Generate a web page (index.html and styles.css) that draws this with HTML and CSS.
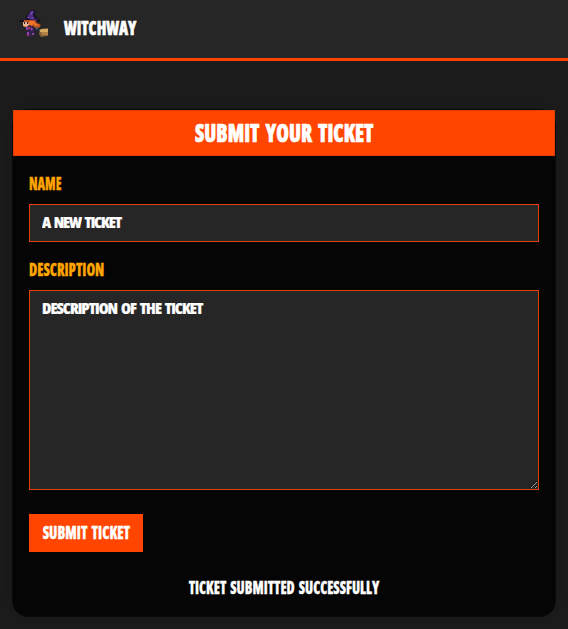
FILE: index.html
```html
<!DOCTYPE html>
<html lang="en">
<head>
<meta charset="utf-8">
<title>Witchway</title>
<link rel="stylesheet" href="styles.css">
</head>
<body>
<header class="navbar">
  <svg class="logo" viewBox="0 0 30 28" aria-hidden="true">
    <path fill="#17121f" d="M8 5 11 1l4-1 3 2-2 2 2 4 4 2-2 2-8-1-11 1-1-2 6-1z"/>
    <path fill="#4c2b83" d="m9 5 3-4 3 0 2 2-3-1 0 3 2 4-8-1zM2 9l6 1 11-1-2 2-9 0z"/>
    <path fill="#7546b4" d="m11 3 3-2v2l-2 2zM9 7l6 1v1L8 8z"/>
    <path fill="#b54e20" d="m5 10 11 0 2 3 4 2-2 3-4 0-2-2-3 2-6-1z"/>
    <path fill="#ed762c" d="m10 11 5 0 2 3 4 1-4 1-3-2-3 3-1-3zM4 13l2-2 1 2-2 3z"/>
    <path fill="#efb18c" d="M4 12h5l1 3-2 2-4-1z"/>
    <path fill="#282038" d="M5 12h1v2H5zm3 0h1v2H8zM0 18h8v1H0zm14 1 7 2v1l-7-1z"/>
    <path fill="#33204f" d="m7 17 4-2 4 3 0 4 2 3-4-1-1 3h-2l-1-3H6l2-3z"/>
    <path fill="#8547a1" d="M7 17h2v3H7zm5 0 2 2-1 2-2-2zM8 22h2v3H8zm5 1h2v2h-2z"/>
    <path fill="#b12852" d="M9 17h2v2H9zm-1 8h2v1H8z"/>
    <path fill="#337584" d="m17 17 2 1-1 2-1-1zm3 3 2-1v2h-2z"/>
    <path fill="#82603a" d="m21 19 8-1v8l-7 1-2-3z"/>
    <path fill="#d5a960" d="m21 20 2-1h6v3h-8z"/>
    <path fill="#b18345" d="M22 22h7v3h-6z"/>
  </svg>
  <span class="brand">WITCHWAY</span>
</header>
<main class="card">
  <h1 class="card-title"><span class="title-text">SUBMIT YOUR TICKET</span></h1>
  <form class="ticket-form">
    <label class="label name-label" for="name">NAME</label>
    <input class="field name-field" id="name" value="A NEW TICKET">
    <label class="label description-label" for="description">DESCRIPTION</label>
    <textarea class="field description-field" id="description" spellcheck="false">DESCRIPTION OF THE TICKET</textarea>
    <button class="submit" type="button"><span class="submit-text">SUBMIT TICKET</span></button>
    <p class="status">TICKET SUBMITTED SUCCESSFULLY</p>
  </form>
</main>
</body>
</html>
```
FILE: styles.css
```css
* { box-sizing: border-box; }
body {
  margin: 0;
  min-height: 629px;
  overflow: hidden;
  background: #1c1c1c;
  color: #fff;
  font: 800 17px/24px "Open Sans", sans-serif;
  font-stretch: 75%;
}
.navbar {
  display: flex;
  height: 61px;
  padding: 10px 19px;
  border-bottom: 3px solid #ff4500;
  background: #262626;
}
.logo { width: 30px; height: 28px; }
.brand {
  margin: 6px 0 0 15px;
  font-size: 20px;
  -webkit-text-stroke: .6px;
  white-space: nowrap;
  transform: scaleX(.79);
  transform-origin: left;
}
.card {
  width: 544px;
  height: 508px;
  margin: 48px 12px 0;
  border: 1px solid #090909;
  border-radius: 16px;
  background: #050505;
  box-shadow: 0 0 20px rgba(0, 0, 0, .18);
}
.card-title {
  height: 46px;
  margin: 0;
  border: 1px solid #df3e03;
  background: #ff4500;
  font-size: 25px;
  font-weight: 800;
  line-height: 42px;
  text-align: center;
  -webkit-text-stroke: .7px;
  white-space: nowrap;
}
.title-text { display: inline-block; word-spacing: 3px; transform: scaleX(.817); }
.ticket-form { display: flex; flex-direction: column; padding: 16px; }
.label {
  height: 24px;
  margin-bottom: 8px;
  color: orange;
  line-height: 24px;
  -webkit-text-stroke: .3px;
  transform-origin: left;
}
.name-label { transform: scaleX(.77); }
.description-label { transform: scaleX(.825); }
.label, .submit, .status { white-space: nowrap; }
.field {
  width: 510px;
  margin: 0 0 16px;
  padding: 5px 12px 7px;
  border: 1px solid #e34009;
  border-radius: 0;
  outline: 0;
  background: #262626;
  color: #fff;
  font: inherit;
  font-size: 16px;
  letter-spacing: -.98px;
  word-spacing: 2px;
  -webkit-text-stroke: .2px;
}
.name-field { height: 38px; letter-spacing: -1.15px; }
.description-field { height: 200px; margin-bottom: 24px; resize: both; }
.submit {
  width: 114px;
  height: 38px;
  padding: 0;
  border: 1px solid #ff4500;
  background: #ff4500;
  color: #fff;
  font: inherit;
  -webkit-text-stroke: .3px;
}
.submit-text { display: inline-block; margin: 0 -5px; word-spacing: 2px; transform: scaleX(.835); }
.status {
  margin: 24px 0 0;
  text-align: center;
  word-spacing: 2px;
  -webkit-text-stroke: .3px;
  transform: scaleX(.815);
}
```
